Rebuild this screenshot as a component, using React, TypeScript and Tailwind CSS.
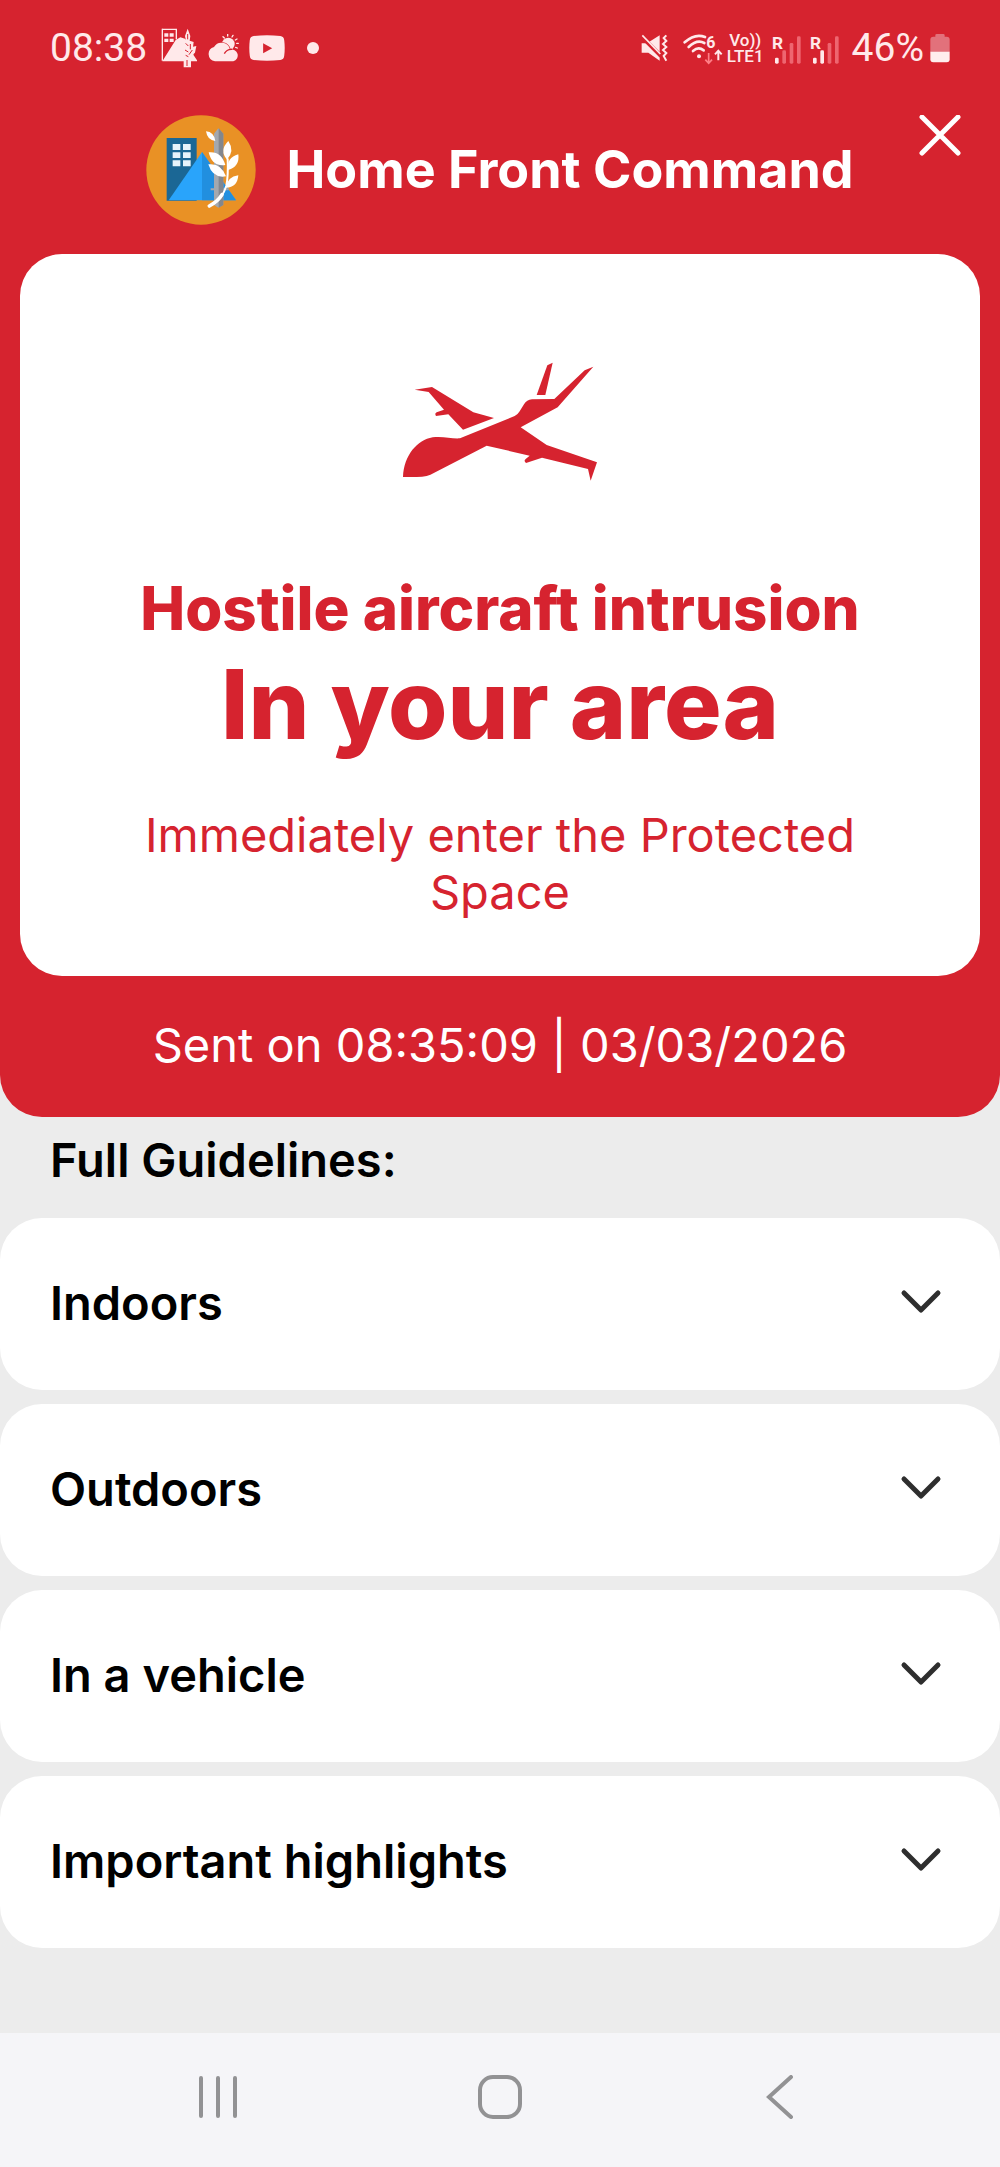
import { useState } from 'react'

const guidelines = [
  { id: 'indoors', title: 'Indoors' },
  { id: 'outdoors', title: 'Outdoors' },
  { id: 'vehicle', title: 'In a vehicle' },
  { id: 'highlights', title: 'Important highlights' },
]

function AppAlertIcon() {
  return (
    <svg viewBox="0 0 108 120" className="w-9 h-10" aria-hidden="true">
      <path d="M4 4H46V34" fill="none" stroke="currentColor" strokeWidth="4" />
      <path d="M4 2V98" stroke="currentColor" strokeWidth="4" />
      <path d="M10 16h12v10H10zM26 16h12v10H26zM10 32h12v10H10zM26 32h12v10H26z" fill="currentColor" />
      <path d="M4 100 44 36l14-8 14 4 18 20 8 30 12 18H90v18H68v-18z" fill="currentColor" />
      <path d="M72 24 80 2l8 22-2 14 12 4-2 14 10-2-4 20-14 12v14" fill="currentColor" />
      <path d="M80 18v16M74 46l8 8M88 48v16M72 66l10 6M94 66l-10 14M74 82l8 4M78 96v18" stroke="#d6232f" strokeWidth="3" fill="none" />
    </svg>
  )
}

function WeatherIcon() {
  return (
    <svg viewBox="0 0 96 84" className="w-8 h-7" aria-hidden="true" fill="currentColor">
      <circle cx="64" cy="30" r="19" />
      <path d="M48 8l4 4M62 1v5M78 4l-3 5M90 15l-5 3M94 28h-5M91 42l-5-2" stroke="currentColor" strokeWidth="4" strokeLinecap="round" />
      <path d="M24 82a22 22 0 0 1-3-43 26 26 0 0 1 48 8 18 18 0 0 1 10 35z" stroke="#d6232f" strokeWidth="4" paintOrder="stroke" />
      <path d="M52 59q7-14 23-13" fill="none" stroke="#d6232f" strokeWidth="4" />
    </svg>
  )
}

function VideoIcon() {
  return (
    <svg viewBox="0 0 110 80" className="w-9 h-[26px]" aria-hidden="true">
      <path d="M14 3Q55-2 96 3 107 4 108 16q3 24 0 48-1 12-12 13-41 4-82 0Q3 76 2 64-1 40 2 16 3 4 14 3z" fill="currentColor" />
      <path d="M43 25v31l28-15z" fill="#d6232f" />
    </svg>
  )
}

function MutedIcon() {
  return (
    <svg viewBox="0 0 84 84" className="w-7 h-7" aria-hidden="true">
      <path d="M2 28h16L56 4v76L22 56H2z" fill="currentColor" />
      <path d="M2 8 60 66" stroke="#d6232f" strokeWidth="12" />
      <path d="M4 4 58 60" stroke="currentColor" strokeWidth="5" />
      <path d="M76 4 68 12l8 9-10 9 10 9-10 9 10 9-8 9 8 14" fill="none" stroke="currentColor" strokeWidth="6" />
    </svg>
  )
}

function WifiIcon() {
  return (
    <svg viewBox="0 -12 120 102" className="w-10 h-[34px]" aria-hidden="true">
      <g fill="none" stroke="currentColor" strokeWidth="8" strokeLinecap="round">
        <path d="M5 22Q36-6 66 6" />
        <path d="M17 36Q42 12 64 24" />
        <path d="M30 48Q46 34 62 46" />
      </g>
      <circle cx="48" cy="64" r="6" fill="currentColor" />
      <text x="70" y="40" fontSize="48" fontWeight="700" fill="currentColor">6</text>
      <path d="M77 54v30M67 74l10 11 10-11" fill="none" stroke="#ff7f87" strokeWidth="5" />
      <path d="M106 76V48M96 58l10-11 10 11" fill="none" stroke="currentColor" strokeWidth="6" />
    </svg>
  )
}

function SignalIcon({ bars }: { bars: number }) {
  const heights = [18, 40, 62, 82]
  return (
    <svg viewBox="0 -12 90 102" className="w-[30px] h-[34px]" aria-hidden="true">
      <text x="0" y="41" fontSize="52" fontWeight="700" fill="currentColor">R</text>
      {heights.map((h, i) => (
        <rect key={h} x={9 + i * 22} y={86 - h} width="11" height={h} rx="4" fill={i < bars ? '#ffe9ea' : '#ee6670'} />
      ))}
    </svg>
  )
}

function BatteryIcon() {
  return (
    <svg viewBox="0 0 60 88" className="w-5 h-[30px]" aria-hidden="true">
      <path d="M16 10V6q0-4 4-4h20q4 0 4 4v4h6q9 0 9 9v37H1V19q0-9 9-9z" fill="#e2717b" />
      <path d="M1 55h58v23q0 9-9 9H10q-9 0-9-9z" fill="#ffeeee" />
    </svg>
  )
}

function StatusBar() {
  return (
    <div className="flex items-center justify-between h-24 px-[50px] text-[#ffe9ea] font-[Roboto,sans-serif]">
      <div className="flex items-center gap-2.5">
        <span className="text-[39px] leading-10 mr-1">08:38</span>
        <AppAlertIcon />
        <WeatherIcon />
        <VideoIcon />
        <span className="w-3 h-3 ml-3 rounded-full bg-current" />
      </div>
      <div className="flex items-center gap-2">
        <MutedIcon />
        <div className="flex items-center gap-1 ml-1.5">
          <WifiIcon />
          <div className="flex flex-col items-center text-[17px] leading-4 font-medium">
            <span>Vo))</span>
            <span>LTE1</span>
          </div>
        </div>
        <SignalIcon bars={1} />
        <SignalIcon bars={2} />
        <div className="flex items-center gap-1.5 ml-1">
          <span className="text-[39px] leading-10">46%</span>
          <BatteryIcon />
        </div>
      </div>
    </div>
  )
}

function CommandLogo() {
  return (
    <svg viewBox="0 0 330 330" className="w-[110px] h-[110px] shrink-0" role="img" aria-label="Home Front Command">
      <circle cx="165" cy="165" r="164" fill="#e99125" />
      <path d="M62 69h90v188H62z" fill="#1b6795" />
      <path d="M80 87h23v18H80zM111 87h23v18h-23zM80 112h23v17H80zM111 112h23v17h-23zM80 136h23v18H80zM111 136h23v18h-23z" fill="#e6f3fb" />
      <path d="M68 256 168 111l102 145z" fill="#29a4fb" />
      <path d="M168 111 270 256H168z" fill="#218fdf" />
      <path d="M204 56l13-16 15 16v164h16v6h-16v44l-15 8-13-8v-44h-10v-6h10z" fill="#a4a8ae" />
      <path d="M218 40l14 16v214l-14 8z" fill="#83878e" />
      <path d="M192 272q38-20 49-60 6-28 4-80" fill="none" stroke="#fff" strokeWidth="6" strokeLinecap="round" />
      <path d="M190 273q26-14 38-34" stroke="#fff" strokeWidth="11" strokeLinecap="round" fill="none" />
      <g fill="#fff">
        <path d="M180 49q24 2 28 29-24-2-28-29z" />
        <path d="M247 78q-28 28-4 56 24-26 4-56z" />
        <path d="M188 112q38-4 50 38-40 6-50-38z" />
        <path d="M277 118q-36 10-31 47 36-10 31-47z" />
        <path d="M187 148q38-5 53 36-40 7-53-36z" />
        <path d="M277 181q-33 4-37 37 34 0 37-37z" />
      </g>
    </svg>
  )
}

function AircraftIcon() {
  return (
    <svg viewBox="0 0 720 480" className="w-60 h-40" fill="#d6232f" aria-hidden="true">
      <path d="M104 149 156 141 280 217 342 234 249 269 205 223 168 228Q163 221 170 217L192 209 146 156z" />
      <path d="M502 76 518 68 496 165H470z" />
      <path d="M69 411C72 345 112 300 158 292 190 288 215 297 240 295L404 228Q414 223 419 214L432 193Q440 180 456 178L523 177 614 91 640 80 533 202 422 262 500 315 651 367 632 422 624 387 486 353 438 369Q430 363 437 357L449 347 320 317 160 400Q145 411 110 411z" />
    </svg>
  )
}

function Guideline({ title }: { title: string }) {
  const [open, setOpen] = useState(false)

  return (
    <button
      type="button"
      aria-expanded={open}
      onClick={() => setOpen(o => !o)}
      className="flex items-center justify-between w-full h-[172px] pl-[50px] pr-[58px] pb-1 bg-white rounded-[42px] text-[47px] leading-[57px] font-semibold text-left"
    >
      {title}
      <svg viewBox="0 0 42 26" className={open ? 'w-[42px] h-[26px] rotate-180' : 'w-[42px] h-[26px]'} fill="none" stroke="#2e2e2e" strokeWidth="5" strokeLinecap="round" strokeLinejoin="round" aria-hidden="true">
        <path d="M4 4 21 21 38 4" />
      </svg>
    </button>
  )
}

function NavBar() {
  return (
    <nav className="grid grid-cols-3 items-center justify-items-center h-[134px] mt-auto px-20 pb-1.5 bg-[#f5f5f8] text-[#929294]">
      <button type="button" aria-label="Recent apps">
        <svg viewBox="0 0 44 44" className="w-11 h-11" stroke="currentColor" strokeWidth="4" strokeLinecap="round">
          <path d="M3 3v38M20 3v38M37 3v38" />
        </svg>
      </button>
      <button type="button" aria-label="Home">
        <svg viewBox="0 0 44 44" className="w-11 h-11" fill="none" stroke="currentColor" strokeWidth="4">
          <rect x="2" y="2" width="40" height="40" rx="13" />
        </svg>
      </button>
      <button type="button" aria-label="Back">
        <svg viewBox="0 0 44 44" className="w-11 h-11" fill="none" stroke="currentColor" strokeWidth="4" strokeLinecap="round">
          <path d="M33 2 11 22 33 42" />
        </svg>
      </button>
    </nav>
  )
}

export default function App() {
  return (
    <div className="flex flex-col min-h-screen bg-[#ececec] text-black font-[Inter,sans-serif]">
      <div className="bg-[#d6232f] rounded-b-[42px] text-white">
        <StatusBar />

        <header className="grid grid-cols-[44px_1fr_44px] px-[38px] pt-[19px] pb-[29px]">
          <div className="col-start-2 flex items-center justify-center gap-[30px]">
            <CommandLogo />
            <h1 className="text-[52px] leading-[60px] font-bold whitespace-nowrap">Home Front Command</h1>
          </div>
          <button type="button" aria-label="Close" className="self-start">
            <svg viewBox="0 0 44 44" className="w-11 h-11" stroke="currentColor" strokeWidth="5" strokeLinecap="round">
              <path d="M4 2 40 38M40 2 4 38" />
            </svg>
          </button>
        </header>

        <main className="flex flex-col items-center mx-5 px-20 pt-[86px] pb-14 bg-white rounded-[42px] text-[#d6232f] text-center">
          <AircraftIcon />
          <h2 className="mt-[72px] text-[60px] leading-[72px] font-extrabold">Hostile aircraft intrusion</h2>
          <p className="mt-1 text-[96px] leading-[112px] font-extrabold">In your area</p>
          <p className="mt-[46px] text-[47px] leading-[57px]">Immediately enter the Protected Space</p>
        </main>

        <p className="pt-10 pb-11 text-[47px] leading-[57px] text-center">Sent on 08:35:09 | 03/03/2026</p>
      </div>

      <h3 className="px-[50px] pt-3.5 pb-[30px] text-[47px] leading-[57px] font-semibold">Full Guidelines:</h3>
      <div className="flex flex-col gap-3.5 pb-8">
        {guidelines.map(g => <Guideline key={g.id} title={g.title} />)}
      </div>

      <NavBar />
    </div>
  )
}
